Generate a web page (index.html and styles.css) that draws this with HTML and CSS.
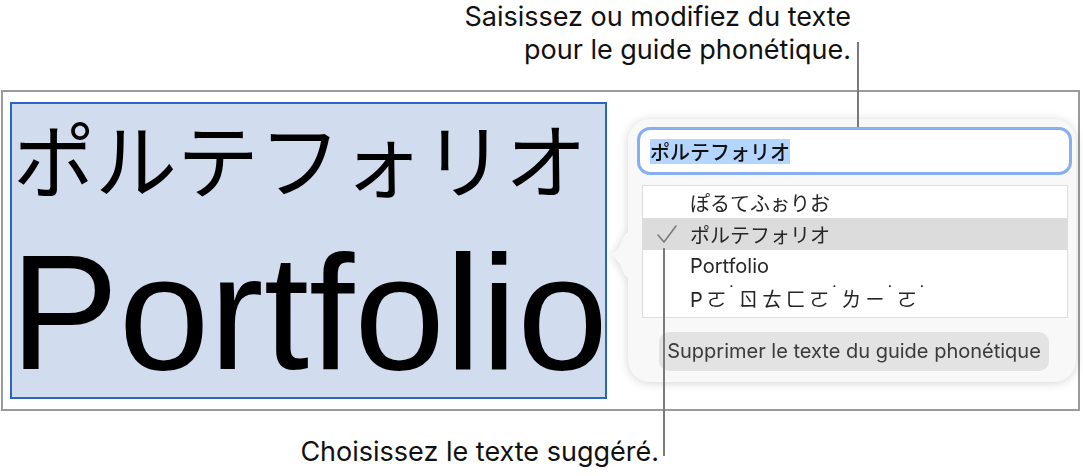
FILE: index.html
```html
<!DOCTYPE html>
<html lang="fr">
<head>
<meta charset="utf-8">
<title>Guide phonétique</title>
<link rel="stylesheet" href="styles.css">
</head>
<body>
<div class="page">
  <div class="top-note">
    <p class="note-line">Saisissez ou modifiez du texte</p>
    <p class="note-line">pour le guide phonétique.</p>
  </div>

  <div class="frame">
    <div class="selection">
      <div class="big-jp">ポルテフォリオ</div>
      <div class="big-en">Portfolio</div>
    </div>

    <div class="popover">
      <svg class="pop-arrow" width="18" height="46" viewBox="0 0 18 46">
        <path d="M18 0 C13 1 12 8 8 15 C5 20 1 21 1 23 C1 25 5 26 8 31 C12 38 13 45 18 46 Z" fill="#f8f8f8"/>
      </svg>
      <div class="field"><span class="field-sel">ポルテフォリオ</span></div>
      <div class="list">
        <div class="row"><span class="check-cell"></span><span class="row-text jp">ぽるてふぉりお</span></div>
        <div class="row row-on"><span class="check-cell"><svg width="22" height="20" viewBox="0 0 22 20"><polyline points="2,11 8,18 20,2" fill="none" stroke="#7b7b7b" stroke-width="1.6" stroke-linejoin="round" stroke-linecap="round"/></svg></span><span class="row-text jp">ポルテフォリオ</span></div>
        <div class="row"><span class="check-cell"></span><span class="row-text">Portfolio</span></div>
        <div class="row"><span class="check-cell"></span><span class="row-text bpmf">P ㄛ<span class="tone">˙</span>ㄖ ㄊ ㄈ ㄛ<span class="tone">˙</span>ㄌ ㄧ<span class="tone">˙</span>ㄛ<span class="tone">˙</span></span></div>
      </div>
      <div class="remove-btn">Supprimer le texte du guide phonétique</div>
    </div>
  </div>

  <div class="bottom-note">Choisissez le texte suggéré.</div>

  <div class="leader leader-top"></div>
  <div class="leader leader-bottom"></div>
</div>
</body>
</html>
```

FILE: styles.css
```css
html, body {
  margin: 0;
  padding: 0;
  background: #ffffff;
}

.page {
  position: relative;
  width: 1083px;
  height: 476px;
  overflow: hidden;
  font-family: "Inter", "Liberation Sans", sans-serif;
  color: #111111;
}

.top-note {
  width: 851px;
  height: 90px;
  box-sizing: border-box;
  padding-top: 0;
  text-align: right;
}

.note-line {
  margin: 0;
  font-size: 27px;
  line-height: 33px;
  color: #111111;
}

.frame {
  margin-left: 1px;
  width: 1079px;
  height: 321px;
  box-sizing: border-box;
  border: 2px solid #9a9a9a;
  display: flex;
  align-items: flex-start;
  padding: 10px 0 0 7px;
}

.selection {
  width: 597px;
  height: 297px;
  box-sizing: border-box;
  border: 2px solid #2a66c0;
  background: #d1dcee;
  padding: 12px 0 0 1px;
  flex-shrink: 0;
}

.big-jp {
  font-family: "Noto Sans CJK JP", sans-serif;
  font-size: 82px;
  line-height: 82px;
  height: 82px;
  color: #000000;
  white-space: nowrap;
}

.big-en {
  font-family: "Liberation Sans", Arial, sans-serif;
  font-size: 163px;
  line-height: 163px;
  margin-top: 33px;
  margin-left: -3px;
  color: #000000;
  white-space: nowrap;
}

.popover {
  position: relative;
  margin-left: 21px;
  margin-top: 17px;
  width: 448px;
  height: 263px;
  box-sizing: border-box;
  background: #f8f8f8;
  border-radius: 22px;
  padding: 8px 4px 0 9px;
  filter: drop-shadow(0 1px 5px rgba(0, 0, 0, 0.17));
  flex-shrink: 0;
}

.pop-arrow {
  position: absolute;
  left: -17px;
  top: 113px;
}

.field {
  height: 48px;
  box-sizing: border-box;
  border: 3px solid #86aef0;
  border-radius: 13px;
  background: #ffffff;
  padding: 0 10px;
  display: flex;
  align-items: center;
}

.field-sel {
  font-family: "Noto Sans CJK JP", sans-serif;
  font-weight: 500;
  font-size: 20px;
  line-height: 25px;
  background: #b4d5fe;
  color: #111111;
}

.list {
  margin: 10px 4px 0 5px;
  height: 133px;
  box-sizing: border-box;
  border: 1px solid #dddddd;
  background: #ffffff;
}

.row {
  height: 32px;
  display: flex;
  align-items: center;
}

.row-on {
  background: #dcdcdc;
}

.check-cell {
  width: 47px;
  height: 32px;
  display: flex;
  align-items: center;
  justify-content: flex-start;
  padding-left: 13px;
  box-sizing: border-box;
}

.row-text {
  font-size: 20px;
  color: #262626;
  white-space: nowrap;
}

.row-text.jp {
  font-family: "Noto Sans CJK JP", sans-serif;
}

.row-text.bpmf {
  font-family: "Inter", "Noto Sans CJK TC", sans-serif;
  word-spacing: -2px;
}

.tone {
  font-family: "Liberation Sans", sans-serif;
  display: inline-block;
  width: 12px;
  text-align: center;
  vertical-align: top;
  margin-top: -2px;
}

.remove-btn {
  margin: 14px 0 0 22px;
  width: 390px;
  height: 39px;
  border-radius: 10px;
  background: #e3e3e3;
  color: #3a3a3a;
  font-size: 20px;
  line-height: 39px;
  text-align: center;
  white-space: nowrap;
}

.bottom-note {
  width: 659px;
  margin-top: 24px;
  text-align: right;
  font-size: 27px;
  line-height: 33px;
  color: #111111;
}

.leader {
  position: absolute;
  width: 2px;
  background: #7a7a7a;
}

.leader-top {
  left: 857px;
  top: 42px;
  height: 85px;
}

.leader-bottom {
  left: 663px;
  top: 248px;
  height: 208px;
}
```
